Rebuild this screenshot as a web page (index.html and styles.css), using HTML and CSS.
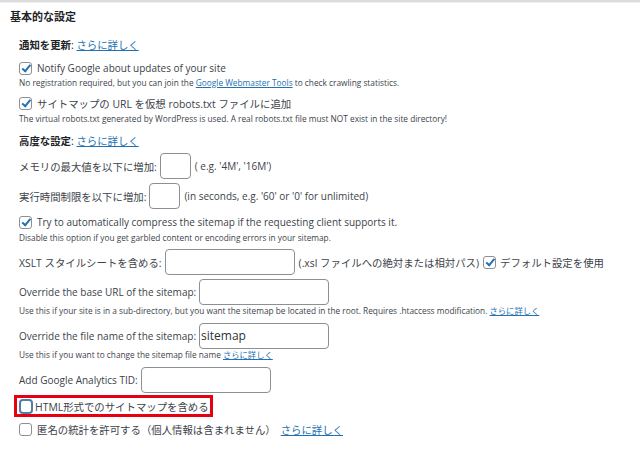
FILE: index.html
```html
<!DOCTYPE html>
<html lang="ja">
<head>
<meta charset="utf-8">
<link rel="stylesheet" href="styles.css">
</head>
<body>
<div class="top-rule"></div>
<h2 class="section-title">基本的な設定</h2>
<div class="options">
  <p class="group-title"><strong>通知を更新</strong>: <a href="#">さらに詳しく</a></p>
  <label class="check-row"><span class="cb checked"></span><span>Notify Google about updates of your site</span></label>
  <p class="desc">No registration required, but you can join the <a href="#">Google Webmaster Tools</a> to check crawling statistics.</p>
  <label class="check-row gap5"><span class="cb checked"></span><span class="ja">サイトマップの URL を仮想 robots.txt ファイルに追加</span></label>
  <p class="desc tight">The virtual robots.txt generated by WordPress is used. A real robots.txt file must NOT exist in the site directory!</p>
  <p class="group-title g2"><strong>高度な設定</strong>: <a href="#">さらに詳しく</a></p>
  <div class="field-row first"><span class="ja">メモリの最大値を以下に増加:</span><span class="input small"></span><span class="after">( e.g. '4M', '16M')</span></div>
  <div class="field-row"><span class="ja">実行時間制限を以下に増加:</span><span class="input small"></span><span class="after">(in seconds, e.g. '60' or '0' for unlimited)</span></div>
  <label class="check-row gap5"><span class="cb checked"></span><span>Try to automatically compress the sitemap if the requesting client supports it.</span></label>
  <p class="desc tight">Disable this option if you get garbled content or encoding errors in your sitemap.</p>
  <div class="field-row"><span class="ja">XSLT スタイルシートを含める:</span><span class="input wide"></span><span class="after ja">(.xsl ファイルへの絶対または相対パス)</span><span class="cb checked inline"></span><span class="ja">デフォルト設定を使用</span></div>
  <div class="field-row"><span>Override the base URL of the sitemap:</span><span class="input wide"></span></div>
  <p class="desc small-desc">Use this if your site is in a sub-directory, but you want the sitemap be located in the root. Requires .htaccess modification. <a href="#">さらに詳しく</a></p>
  <div class="field-row f6"><span>Override the file name of the sitemap:</span><span class="input wide">sitemap</span></div>
  <p class="desc small-desc">Use this if you want to change the sitemap file name <a href="#">さらに詳しく</a></p>
  <div class="field-row f6"><span>Add Google Analytics TID:</span><span class="input wide"></span></div>
  <div class="highlight"><label class="check-row in-box"><span class="cb focus"></span><span class="ja">HTML形式でのサイトマップを含める</span></label></div>
  <label class="check-row last"><span class="cb"></span><span class="ja">匿名の統計を許可する（個人情報は含まれません）</span><a href="#" class="more ja">さらに詳しく</a></label>
</div>
</body>
</html>
```
FILE: styles.css
```css
html, body {
  margin: 0;
  padding: 0;
  background: #fff;
}
body {
  font-family: "Open Sans", "Noto Sans CJK JP", sans-serif;
  color: #3c434a;
  font-size: 10px;
  width: 640px;
  height: 449px;
  overflow: hidden;
}
.ja {
  font-size: 10.4px;
}
.top-rule {
  height: 2px;
  background: #dcdcde;
  border-bottom: 1px solid #f2f2f2;
}
.section-title {
  margin: 0;
  height: 27px;
  line-height: 27px;
  padding-left: 10px;
  font-size: 11px;
  font-weight: 700;
  color: #1d2327;
}
.options {
  padding-left: 19px;
}
a {
  color: #2271b1;
  text-decoration: underline;
}
.group-title {
  margin: 0;
  height: 30px;
  line-height: 30px;
  color: #1d2327;
  font-size: 10.4px;
}
.group-title strong {
  font-weight: 700;
}
.group-title.g2 {
  height: 23px;
  line-height: 23px;
  margin-top: 4px;
}
.check-row {
  display: flex;
  align-items: center;
  height: 16px;
  white-space: nowrap;
}
.check-row.gap5 {
  margin-top: 5px;
}
.cb {
  width: 11px;
  height: 11px;
  border: 1px solid #8c8f94;
  border-radius: 3px;
  margin-right: 5px;
  flex: none;
  position: relative;
  background: #fff;
}
.cb.checked::after {
  content: "";
  position: absolute;
  left: 3.5px;
  top: 0.5px;
  width: 3px;
  height: 6.5px;
  border: solid #2271b1;
  border-width: 0 2px 2px 0;
  transform: rotate(40deg);
}
.cb.focus {
  border: 2px solid #4f7fa8;
  width: 10px;
  height: 11px;
  border-radius: 4px;
  margin-right: 2px;
}
.cb.inline {
  margin-left: 4px;
  margin-right: 4px;
}
.desc {
  margin: 0;
  height: 14px;
  line-height: 14px;
  font-size: 8.3px;
  white-space: nowrap;
}
.desc.tight {
  margin-top: 1px;
}
.desc.small-desc {
  height: 12px;
  line-height: 12px;
}
.field-row {
  display: flex;
  align-items: center;
  height: 26px;
  margin-top: 4px;
  white-space: nowrap;
}
.field-row.first {
  margin-top: 0;
}
.field-row.f6 {
  margin-top: 6px;
}
.input {
  box-sizing: border-box;
  height: 26px;
  border: 1px solid #8c8f94;
  border-radius: 4px;
  margin-left: 3px;
  padding: 0 1px;
  line-height: 24px;
  font-size: 12px;
  color: #2c3338;
}
.input.small {
  width: 31px;
}
.input.wide {
  width: 130px;
}
.after {
  margin-left: 4px;
}
.highlight {
  box-sizing: border-box;
  margin-top: 2px;
  margin-left: -5px;
  width: 199px;
  height: 22px;
  padding: 0 0 0 2px;
  border: 3px solid #e60012;
  display: flex;
  align-items: center;
}
.check-row.last {
  margin-top: 4px;
}
.more {
  margin-left: 5px;
}
```
